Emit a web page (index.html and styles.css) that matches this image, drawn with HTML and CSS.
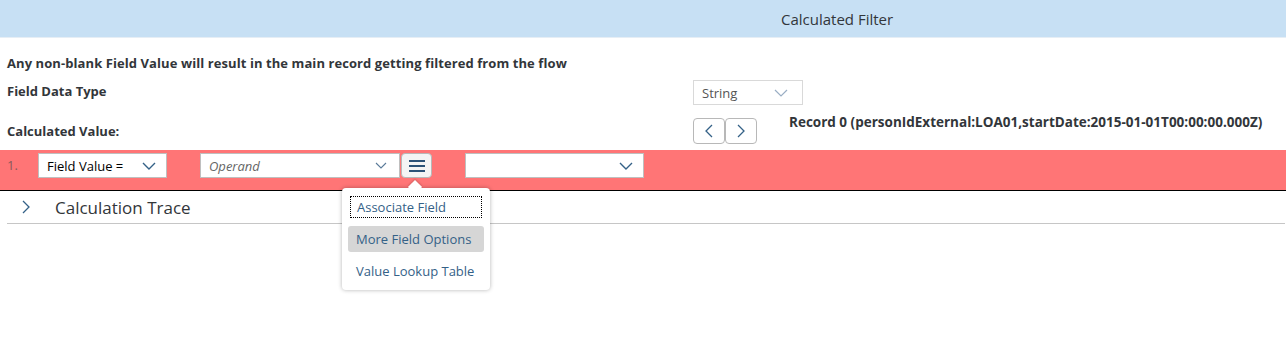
FILE: index.html
```html
<!DOCTYPE html>
<html lang="en">
<head>
  <meta charset="UTF-8">
  <meta name="viewport" content="width=device-width, initial-scale=1">
  <title>Calculated Filter</title>
  <link rel="stylesheet" href="styles.css">
</head>
<body>

  <div class="header">
    <span class="header-title">Calculated Filter</span>
  </div>

  <div class="form">
    <p class="notice">Any non-blank Field Value will result in the main record getting filtered from the flow</p>

    <div class="form-row row-type">
      <span class="label label-type">Field Data Type</span>
      <div class="select select-type">
        <span>String</span>
        <svg class="chev chev-light" width="14" height="8" viewBox="0 0 14 8"><path d="M1 1l6 6 6-6" fill="none" stroke="#9aaec4" stroke-width="1.2"/></svg>
      </div>
    </div>

    <div class="form-row row-value">
      <span class="label">Calculated Value:</span>
      <div class="nav">
        <button class="nav-btn">
          <svg width="8" height="14" viewBox="0 0 8 14"><path d="M7 1L1 7l6 6" fill="none" stroke="#346187" stroke-width="1.3"/></svg>
        </button>
        <button class="nav-btn">
          <svg width="8" height="14" viewBox="0 0 8 14"><path d="M1 1l6 6-6 6" fill="none" stroke="#346187" stroke-width="1.3"/></svg>
        </button>
      </div>
      <span class="record">Record 0 (personIdExternal:LOA01,startDate:2015-01-01T00:00:00.000Z)</span>
    </div>
  </div>

  <div class="expr-row">
    <span class="expr-num">1.</span>
    <div class="select select-field">
      <span>Field Value =</span>
      <svg width="14" height="8" viewBox="0 0 14 8"><path d="M1 1l6 6 6-6" fill="none" stroke="#346187" stroke-width="1.4"/></svg>
    </div>
    <div class="select select-operand">
      <span>Operand</span>
      <svg width="12" height="7" viewBox="0 0 12 7"><path d="M1 1l5 5 5-5" fill="none" stroke="#5a7a99" stroke-width="1.1"/></svg>
    </div>
    <div class="menu-wrap">
      <button class="menu-btn">
        <svg width="18" height="14" viewBox="0 0 18 14"><path d="M1 2h16M1 7h16M1 12h16" stroke="#2c5277" stroke-width="2"/></svg>
      </button>
      <div class="popover">
        <div class="pop-item pop-focus">Associate Field</div>
        <div class="pop-item pop-hover">More Field Options</div>
        <div class="pop-item pop-last">Value Lookup Table</div>
      </div>
    </div>
    <div class="select select-third">
      <span></span>
      <svg width="14" height="8" viewBox="0 0 14 8"><path d="M1 1l6 6 6-6" fill="none" stroke="#346187" stroke-width="1.4"/></svg>
    </div>
  </div>

  <div class="trace">
    <svg class="trace-chev" width="8" height="14" viewBox="0 0 8 14"><path d="M1 1l6 6-6 6" fill="none" stroke="#346187" stroke-width="1.3"/></svg>
    <span>Calculation Trace</span>
  </div>

</body>
</html>
```

FILE: styles.css
```css
html {
  height: 100%;
}

body {
  font-family: 'Open Sans', 'Liberation Sans', Arial, sans-serif;
  background-color: #ffffff;
  color: #32363a;
  margin: 0;
  padding: 0;
  min-height: 100%;
}

.header {
  background-color: #c7e0f4;
  height: 37px;
  border-bottom: 1px solid #e6eef5;
  display: flex;
  align-items: center;
  padding-left: 781px;
  font-size: 15px;
}

.form {
  padding: 0 7px;
}

.notice {
  margin: 0;
  padding-top: 16px;
  height: 18px;
  font-size: 13px;
  letter-spacing: 0.08px;
  font-weight: bold;
  line-height: 18px;
}

.form-row {
  display: flex;
  align-items: center;
}

.label {
  width: 686px;
  font-size: 13px;
  font-weight: bold;
}

.label-type {
  margin-top: -3px;
}

.row-type {
  margin-top: 8px;
  height: 25px;
}

.row-value {
  margin-top: 13px;
  height: 25px;
}

.select {
  box-sizing: border-box;
  height: 25px;
  background: #ffffff;
  border: 1px solid #bfbfbf;
  display: flex;
  align-items: center;
  justify-content: space-between;
  padding: 0 8px;
  font-size: 13px;
}

.select-type {
  width: 110px;
  color: #555;
  padding-right: 14px;
  border-color: #d9d9d9;
}

.nav {
  display: flex;
  width: 96px;
}

.nav-btn {
  box-sizing: border-box;
  width: 32px;
  height: 26px;
  background: #ffffff;
  border: 1px solid #b8b8b8;
  border-radius: 4px;
  padding: 0;
  display: flex;
  align-items: center;
  justify-content: center;
}

.record {
  font-size: 13.5px;
  font-weight: bold;
  margin-top: -18px;
}

.expr-row {
  margin-top: 7px;
  background-color: #ff7576;
  border-bottom: 1px solid #000;
  display: flex;
  align-items: flex-start;
  padding-top: 3px;
  box-sizing: border-box;
  height: 41px;
}

.expr-num {
  width: 38px;
  padding-left: 7px;
  box-sizing: border-box;
  line-height: 25px;
  font-size: 13px;
  color: #8a5a5a;
}

.select-field {
  width: 129px;
  color: #000;
  padding-right: 10px;
}

.select-operand {
  margin-left: 33px;
  width: 200px;
  color: #666;
  font-style: italic;
  padding-right: 12px;
}

.menu-wrap {
  position: relative;
  margin-left: 1px;
}

.menu-btn {
  box-sizing: border-box;
  width: 31px;
  height: 25px;
  background: #f4f4f4;
  border: 1px solid #b8b8b8;
  border-radius: 4px;
  padding: 0;
  display: flex;
  align-items: center;
  justify-content: center;
}

.popover {
  position: absolute;
  top: 35px;
  left: -59px;
  width: 148px;
  box-sizing: border-box;
  background: #ffffff;
  border-radius: 4px;
  box-shadow: 0 0 4px rgba(0, 0, 0, 0.3);
  padding: 7px 6px 6px;
  z-index: 2;
}

.popover::before {
  content: '';
  position: absolute;
  top: -6px;
  left: 68px;
  width: 10px;
  height: 10px;
  background: #ffffff;
  transform: rotate(45deg);
  box-shadow: -1px -1px 2px rgba(0, 0, 0, 0.15);
}

.pop-item {
  position: relative;
  font-size: 13px;
  color: #346187;
  height: 26px;
  line-height: 26px;
  padding-left: 8px;
  margin-bottom: 6px;
  border-radius: 3px;
  box-sizing: border-box;
}

.pop-focus {
  margin: 1px 2px 8px;
  height: 22px;
  line-height: 20px;
  padding-left: 6px;
  border: 1px dotted #000;
  border-radius: 0;
}

.pop-hover {
  background: #d6d6d6;
}

.pop-last {
  margin-bottom: 0;
}

.select-third {
  margin-left: 33px;
  width: 179px;
  padding-right: 10px;
}

.trace {
  height: 32px;
  border-bottom: 1px solid #c6c6c6;
  margin: 0 1px 0 7px;
  display: flex;
  align-items: center;
  font-size: 17px;
}

.trace-chev {
  margin-left: 15px;
  margin-right: 25px;
}
```
